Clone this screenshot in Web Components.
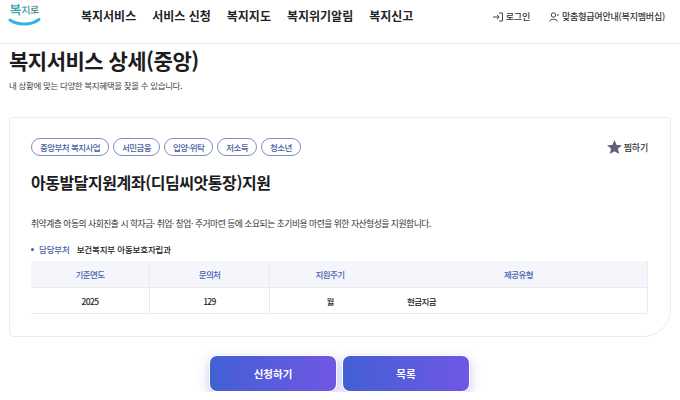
<!DOCTYPE html>
<html lang="ko">
<head>
<meta charset="utf-8">
<style>
  body { margin: 0; background: #fff; font-family: "Noto Sans CJK KR", "Noto Sans", sans-serif; color: #222; overflow: hidden; }
</style>
</head>
<body>
<site-header></site-header>
<page-title></page-title>
<service-card></service-card>
<action-bar></action-bar>
<script>
(function () {
  class SiteHeader extends HTMLElement {
    constructor() {
      super();
      const shadowRoot = this.attachShadow({ mode: "open" });
      shadowRoot.innerHTML = `
        <style>
          :host { display: flex; height: 44px; box-sizing: border-box; border-bottom: 1px solid #eeeeef; padding: 0 15px 0 8px; align-items: flex-start; }
          .logo { width: 73px; height: 34px; flex: none; padding-top: 2px; box-sizing: border-box; }
          .mark { display: flex; align-items: baseline; height: 16px; padding: 0 0 0 2px; box-sizing: border-box; line-height: 15px; font-weight: 500; transform: rotate(-3deg); transform-origin: left bottom; white-space: nowrap; letter-spacing: -.4px; }
          .mark .a { font-size: 13px; color: #2f9fae; }
          .mark .b { font-size: 10px; color: #2f9fae; }
          .mark .c { font-size: 10px; color: #4b7f78; }
          .logo svg { display: block; }
          nav { display: flex; gap: 16px; font-size: 12px; font-weight: 700; line-height: 16px; padding-top: 8px; color: #222; }
          .util { margin-left: auto; display: flex; gap: 19px; font-size: 9px; line-height: 12px; padding-top: 11px; color: #333; letter-spacing: -.2px; font-weight: 500; }
          .util div { display: flex; align-items: center; gap: 3px; }
        </style>
        <div class="logo">
          <div class="mark"><span class="a">복</span><span class="b">지</span><span class="c">로</span></div>
          <svg width="34" height="9" viewBox="0 0 34 9"><path d="M2 2C10 7.5 23 7.5 31 1.5" fill="none" stroke="#2fb4e6" stroke-width="3" stroke-linecap="round"/></svg>
        </div>
        <nav><span>복지서비스</span><span>서비스 신청</span><span>복지지도</span><span>복지위기알림</span><span>복지신고</span></nav>
        <div class="util">
          <div>
            <svg width="10" height="10" viewBox="0 0 10 10" fill="none" stroke="#444" stroke-width="1"><path d="M0 5H6M4 3L6.2 5L4 7M6 1H9.5V9H6"/></svg>
            <span>로그인</span>
          </div>
          <div>
            <svg width="10" height="10" viewBox="0 0 10 10" fill="none" stroke="#444" stroke-width="1"><circle cx="4.5" cy="3" r="2.2"/><path d="M.5 9.5C1 6.5 8 6.5 8.5 9.5M8 3H10"/></svg>
            <span>맞춤형급여안내(복지멤버십)</span>
          </div>
        </div>
      `;
    }
  }

  class PageTitle extends HTMLElement {
    constructor() {
      super();
      const shadowRoot = this.attachShadow({ mode: "open" });
      shadowRoot.innerHTML = `
        <style>
          :host { display: block; padding: 0 9px; height: 73px; box-sizing: border-box; }
          h1 { margin: 0; font-size: 21px; line-height: 32px; font-weight: 700; color: #1c1c1e; letter-spacing: -.5px; }
          p { margin: 2px 0 0; font-size: 8.5px; line-height: 14px; color: #444; letter-spacing: -.35px; }
        </style>
        <h1>복지서비스 상세(중앙)</h1>
        <p>내 상황에 맞는 다양한 복지혜택을 찾을 수 있습니다.</p>
      `;
    }
  }

  class TagPill extends HTMLElement {
    constructor() {
      super();
      const shadowRoot = this.attachShadow({ mode: "open" });
      shadowRoot.innerHTML = `
        <style>
          :host { display: block; height: 18px; box-sizing: border-box; border: 1px solid #7d8fc0; border-radius: 9px; padding: 0 8px; font-size: 8.5px; line-height: 16px; color: #4a5f9e; font-weight: 500; letter-spacing: -.55px; white-space: nowrap; }
        </style>
        <slot></slot>
      `;
    }
  }

  class InfoTable extends HTMLElement {
    constructor() {
      super();
      const shadowRoot = this.attachShadow({ mode: "open" });
      shadowRoot.innerHTML = `
        <style>
          :host { display: grid; grid-template-columns: 119px 120px 120px 258px; font-size: 8.5px; letter-spacing: -.6px; }
          div { display: flex; align-items: center; justify-content: center; box-sizing: border-box; border-right: 1px solid #e9ebf1; border-bottom: 1px solid #e9ebf1; }
          div:nth-child(4n) { border-right: 0; }
          .th { height: 27px; background: #f4f6fb; color: #4a62ad; font-weight: 500; }
          .td { height: 26px; color: #222; font-weight: 500; }
          .left { justify-content: flex-start; padding-left: 17px; }
        </style>
        <div class="th">기준연도</div><div class="th">문의처</div><div class="th">지원주기</div><div class="th">제공유형</div>
        <div class="td">2025</div><div class="td">129</div><div class="td">월</div><div class="td left">현금지급</div>
      `;
    }
  }

  class ServiceCard extends HTMLElement {
    constructor() {
      super();
      const shadowRoot = this.attachShadow({ mode: "open" });
      shadowRoot.innerHTML = `
        <style>
          :host { display: block; box-sizing: border-box; width: 662px; height: 220px; margin-left: 9px; border: 1px solid #ececee; border-radius: 4px 4px 28px 4px; padding: 20px 22px 0 21px; }
          .top { display: flex; align-items: center; height: 18px; }
          .tags { display: flex; gap: 4px; }
          .fav { margin-left: auto; display: flex; align-items: center; gap: 2px; font-size: 9px; font-weight: 500; color: #333; letter-spacing: -.2px; }
          h2 { margin: 14px 0 0; font-size: 16px; line-height: 24px; font-weight: 700; color: #1c1c1e; letter-spacing: -.45px; }
          .desc { margin: 22px 0 0; font-size: 8.8px; line-height: 16px; color: #333; letter-spacing: -.5px; white-space: nowrap; }
          .dept { display: flex; align-items: center; height: 14px; margin: 10px 0 5px; font-size: 8.5px; font-weight: 500; letter-spacing: -.15px; }
          .dept b { font-weight: 500; color: #4a62ad; margin-right: 7px; }
          .dept i { width: 3px; height: 3px; border-radius: 50%; background: #4a62ad; margin-right: 5px; }
        </style>
        <div class="top">
          <div class="tags">
            <tag-pill>중앙부처 복지사업</tag-pill>
            <tag-pill>서민금융</tag-pill>
            <tag-pill>입양·위탁</tag-pill>
            <tag-pill>저소득</tag-pill>
            <tag-pill>청소년</tag-pill>
          </div>
          <div class="fav">
            <svg width="15" height="14" viewBox="0 0 15 14"><path d="M7.5 0L9.6 4.9L15 5.3L10.9 8.7L12.2 14L7.5 11.2L2.8 14L4.1 8.7L0 5.3L5.4 4.9Z" fill="#5f6078"/></svg>
            <span>찜하기</span>
          </div>
        </div>
        <h2>아동발달지원계좌(디딤씨앗통장)지원</h2>
        <p class="desc">취약계층 아동의 사회진출 시 학자금· 취업· 창업· 주거마련 등에 소요되는 초기비용 마련을 위한 자산형성을 지원합니다.</p>
        <div class="dept"><i></i><b>담당부처</b><span>보건복지부 아동보호자립과</span></div>
        <info-table></info-table>
      `;
    }
  }

  class ActionBar extends HTMLElement {
    constructor() {
      super();
      const shadowRoot = this.attachShadow({ mode: "open" });
      shadowRoot.innerHTML = `
        <style>
          :host { display: flex; justify-content: center; gap: 5px; padding: 18px 0 0 0; margin-left: -1px; }
          button { width: 128px; height: 37px; border: 1px solid #fff; border-radius: 8px; padding: 0; font: inherit; font-size: 10.5px; font-weight: 700; color: #fff; background: linear-gradient(90deg, #4260d4, #7057e4); box-shadow: 0 4px 12px rgba(80, 80, 210, .3); }
        </style>
        <button>신청하기</button>
        <button>목록</button>
      `;
    }
  }

  customElements.define("site-header", SiteHeader);
  customElements.define("page-title", PageTitle);
  customElements.define("tag-pill", TagPill);
  customElements.define("info-table", InfoTable);
  customElements.define("service-card", ServiceCard);
  customElements.define("action-bar", ActionBar);
})();
</script>
</body>
</html>
